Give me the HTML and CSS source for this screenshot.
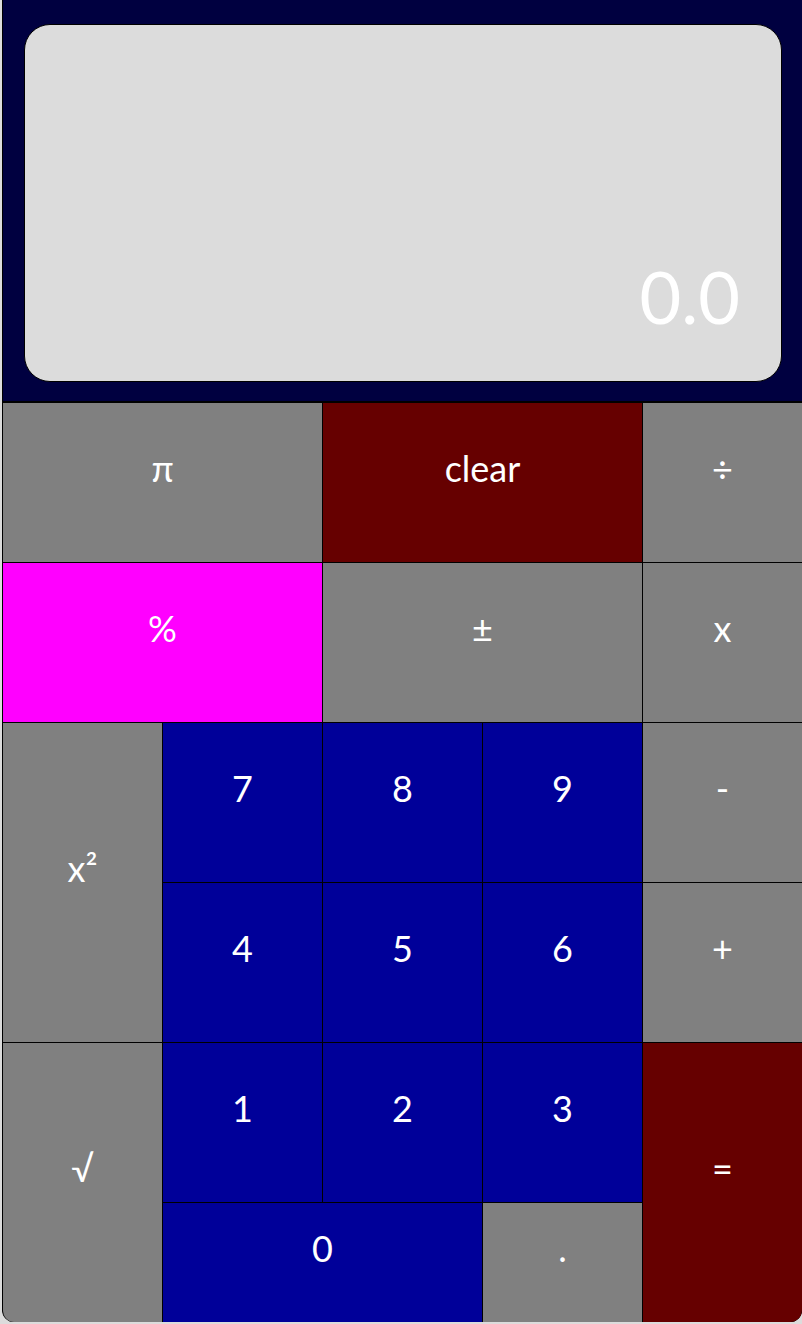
FILE: index.html
```html
<!DOCTYPE html>
<html>
<head>
<meta charset="utf-8">
<link rel="stylesheet" href="styles.css">
</head>
<body>
<div class="calc">
  <div class="screen">
    <div class="display"><span class="value">0.0</span></div>
  </div>
  <div class="keys">
    <div class="key gray span2">π</div>
    <div class="key red span2">clear</div>
    <div class="key gray">÷</div>
    <div class="key pink span2">%</div>
    <div class="key gray span2">±</div>
    <div class="key gray">x</div>
    <div class="key gray tall">x²</div>
    <div class="key blue">7</div>
    <div class="key blue">8</div>
    <div class="key blue">9</div>
    <div class="key gray">-</div>
    <div class="key blue">4</div>
    <div class="key blue">5</div>
    <div class="key blue">6</div>
    <div class="key gray">+</div>
    <div class="key gray tall">√</div>
    <div class="key blue">1</div>
    <div class="key blue">2</div>
    <div class="key blue">3</div>
    <div class="key red tall">=</div>
    <div class="key blue span2">0</div>
    <div class="key gray">.</div>
  </div>
</div>
</body>
</html>
```

FILE: styles.css
```css
html, body {
  margin: 0;
  padding: 0;
  overflow: hidden;
}
body {
  background: #dcdcdc;
  font-family: "Lato", "Liberation Sans", sans-serif;
}
.calc {
  margin-left: 2px;
  width: 800px;
  height: 1322px;
  border-left: 1px solid #000;
  box-sizing: border-box;
  border-radius: 0 0 12px 12px;
  overflow: hidden;
  background: #000;
}
.screen {
  height: 402px;
  box-sizing: border-box;
  background: #000040;
  padding: 24px 20px 19px 21px;
  border-bottom: 1px solid #000;
}
.display {
  height: 100%;
  box-sizing: border-box;
  background: #dcdcdc;
  border: 1px solid #000;
  border-radius: 26px;
  display: flex;
  justify-content: flex-end;
  align-items: flex-end;
  padding: 0 41px 49px 0;
}
.value {
  color: #fff;
  font-size: 72px;
  font-weight: 400;
  line-height: 1;
}
.keys {
  display: grid;
  grid-template-columns: repeat(5, 159px);
  grid-template-rows: repeat(5, 159px) 119px;
  gap: 1px;
  background: #000;
  margin-top: 1px;
}
.key {
  color: #fff;
  font-size: 36px;
  display: flex;
  align-items: center;
  justify-content: center;
  padding-bottom: 30px;
  box-sizing: border-box;
}
.span2 { grid-column: span 2; }
.tall { grid-row: span 2; }
.gray { background: #808080; }
.red { background: #660000; }
.pink { background: #ff00ff; }
.blue { background: #000099; }
```
